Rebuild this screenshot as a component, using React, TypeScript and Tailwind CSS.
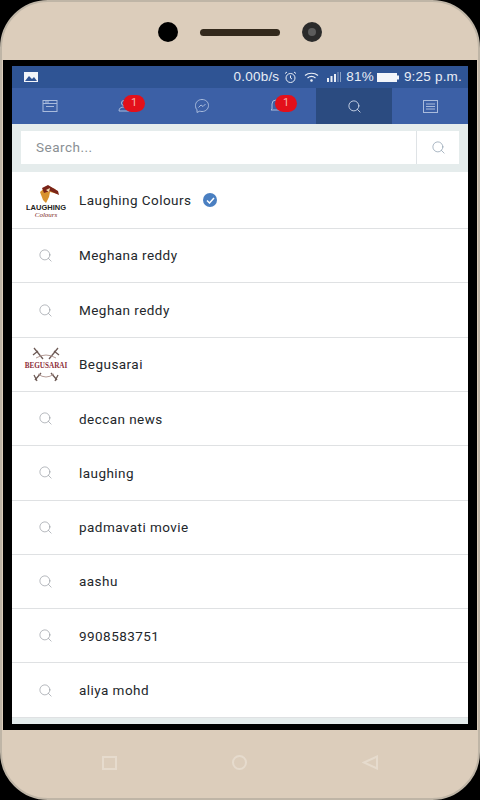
import { Search } from 'lucide-react';

const ROWS = [
  { label: 'Meghana reddy', h: 'h-[54px]' },
  { label: 'Meghan reddy', h: 'h-[55px]' },
];
const ROWS2 = ['deccan news', 'laughing', 'padmavati movie', 'aashu', '9908583751', 'aliya mohd'];

function LaughingLogo() {
  return (
    <svg width="42" height="36" viewBox="0 0 42 36" aria-hidden>
      <path d="M15 10 L22 4 L30 7 L33 12 L25 10 L24 15 L21 21 L18 18 Z" fill="#d8922f" />
      <path d="M17 6 L23 3 L33 9 L34 13 L25 9 L19 11 Z" fill="#7a2418" />
      <path d="M21 8 L25 6 L24 10 Z" fill="#f3e0b8" />
      <text x="21" y="28" textAnchor="middle" fontFamily="Liberation Sans, sans-serif" fontSize="7.5" fontWeight="700" fill="#222">LAUGHING</text>
      <text x="21" y="35" textAnchor="middle" fontFamily="Liberation Serif, serif" fontStyle="italic" fontSize="7" fill="#7a2418">Colours</text>
    </svg>
  );
}

function BegusaraiLogo() {
  return (
    <svg width="46" height="36" viewBox="0 0 46 36" aria-hidden>
      <g stroke="#6d5a55" strokeWidth="1.3" fill="none">
        <path d="M11 1 L20 12 M35 1 L26 12 M12 33 L18 26 M34 33 L28 26" />
        <path d="M10 8 L15 4 M36 8 L31 4 M14 34 L11 28 M32 34 L35 28" />
        <path d="M13 11 Q23 5 33 11 M15 27 Q23 33 31 27" stroke="#b49b96" strokeWidth="1" />
      </g>
      <text x="23" y="20.500" textAnchor="middle" fontFamily="Liberation Serif, serif" fontSize="7.200" fontWeight="700" fill="#8e2f3c">BEGUSARAI</text>
    </svg>
  );
}

function Badge() {
  return (
    <span className="absolute left-[5px] top-[-3px] flex h-[17px] w-[22px] items-center justify-center rounded-full bg-[#e3101a] text-[11px] text-[#f5b5a8]">
      1
    </span>
  );
}

function TabBar() {
  return (
    <div className="flex h-9 bg-[#3c60a6] text-[#a9bbdc]">
      <div className="flex w-[76px] items-center justify-center">
        <svg width="16" height="14" viewBox="0 0 16 14" fill="none" stroke="currentColor" strokeWidth="1">
          <rect x="1" y="1.500" width="14" height="11" />
          <path d="M1 4.500h14M3 3h4M4 7.500h8" />
        </svg>
      </div>
      <div className="flex w-[76px] items-center justify-center">
        <div className="relative h-4 w-4">
          <svg width="12" height="14" viewBox="0 0 12 14" fill="none" stroke="currentColor" strokeWidth="1">
            <circle cx="6" cy="5" r="2.500" />
            <path d="M1 13c0-3 2-4 5-4s5 1 5 4z" />
          </svg>
          <Badge />
        </div>
      </div>
      <div className="flex w-[76px] items-center justify-center">
        <svg width="16" height="16" viewBox="0 0 16 16" fill="none" stroke="currentColor" strokeWidth="1">
          <path d="M8 1.500c3.800 0 6.500 2.700 6.500 6s-2.700 6-6.500 6c-.8 0-1.500-.1-2.200-.4L3 14.500v-2.700C2 10.800 1.500 9.300 1.500 7.500c0-3.300 2.700-6 6.500-6z" />
          <path d="M4.500 9.500l2.500-2.500 2 1.500 2.500-2.500" />
        </svg>
      </div>
      <div className="flex w-[76px] items-center justify-center">
        <div className="relative h-4 w-4">
          <svg width="12" height="14" viewBox="0 0 12 14" fill="none" stroke="currentColor" strokeWidth="1">
            <path d="M2 11V6a4 4 0 0 1 8 0v5l1 1H1z" />
          </svg>
          <Badge />
        </div>
      </div>
      <div className="flex w-[76px] items-center justify-center bg-[#2b4b80] text-[#d5deee]">
        <Search size={15} strokeWidth={1.4} />
      </div>
      <div className="flex w-[76px] items-center justify-center">
        <svg width="15" height="13" viewBox="0 0 15 13" fill="none" stroke="currentColor" strokeWidth="1">
          <rect x="0.500" y="0.500" width="14" height="12" />
          <path d="M3 4h9M3 6.500h9M3 9h9" />
        </svg>
      </div>
    </div>
  );
}

function StatusBar() {
  return (
    <div className="flex h-[22px] items-center justify-between bg-[#2f5494] pl-3 pr-[6px] font-['Liberation_Sans',sans-serif] text-[13.500px] text-[#e8edf5]">
      <svg width="14" height="10" viewBox="0 0 14 10">
        <rect width="14" height="10" fill="#f2f5fa" />
        <path d="M1 9 L5 4 L8 7 L10 5 L13 9 Z" fill="#2f5494" />
      </svg>
      <div className="flex items-center tracking-[0.2px]">
        <span>0.00b/s</span>
        <svg className="ml-[5px]" width="13" height="13" viewBox="0 0 13 13" fill="none" stroke="currentColor" strokeWidth="1">
          <circle cx="6.500" cy="7" r="4.500" />
          <path d="M6.500 4.500V7l1.500 1M1 2.500 3 1M12 2.500 10 1" />
        </svg>
        <svg className="ml-[7px]" width="15" height="10" viewBox="0 0 15 10" fill="none" stroke="currentColor" strokeWidth="1.200">
          <path d="M1 3.500c3.500-3 9.500-3 13 0M3.500 6c2.300-1.800 5.700-1.800 8 0" />
          <circle cx="7.500" cy="8.500" r="0.700" fill="currentColor" />
        </svg>
        <svg className="ml-[8px]" width="15" height="10" viewBox="0 0 15 10" fill="currentColor">
          <rect x="0" y="6" width="2" height="4" />
          <rect x="3.500" y="4" width="2" height="6" />
          <rect x="7" y="2" width="2" height="8" />
          <rect x="10.500" y="0" width="1" height="10" opacity="0.500" />
          <rect x="13" y="0" width="1" height="10" opacity="0.500" />
        </svg>
        <span className="ml-[4px]">81%</span>
        <svg className="ml-[3px]" width="22" height="9" viewBox="0 0 22 9">
          <rect x="0" y="0" width="20" height="9" fill="#f2f5fa" />
          <rect x="20" y="2.500" width="2" height="4" fill="#f2f5fa" />
        </svg>
        <span className="ml-[5px]">9:25 p.m.</span>
      </div>
    </div>
  );
}

function SearchPanel() {
  return (
    <div className="flex h-12 items-center bg-[#e5ecec] px-[9px] pb-[1px]">
      <div className="flex h-[33px] flex-1 bg-white">
        <div className="flex flex-1 items-center pl-[15px] text-[13.500px] tracking-[0.5px] text-[#8a8f94]">Search...</div>
        <div className="flex w-[43px] items-center justify-center border-l border-[#dfe3e6] text-[#8fa0b0]">
          <Search size={15} strokeWidth={1.2} />
        </div>
      </div>
    </div>
  );
}

function Row({ label, icon, after, className }: { label: string; icon: React.ReactNode; after?: React.ReactNode; className: string }) {
  return (
    <div className={`flex items-center border-b border-[#dfe1e3] ${className}`}>
      <div className="flex w-[67px] shrink-0 items-center justify-center">{icon}</div>
      <span className="text-[13.500px] tracking-[0.45px] text-[#23272b]">{label}</span>
      {after}
    </div>
  );
}

const SearchIcon = <Search size={15} strokeWidth={1} className="text-[#8b9198]" />;

export default function App() {
  return (
    <div className="flex h-[800px] w-[480px] flex-col overflow-hidden bg-black font-['Roboto',sans-serif]">
      <div className="flex h-full flex-col overflow-hidden rounded-t-[48px] rounded-b-[48px] border-2 border-[#bfb5a6] bg-[#dccdbb]">
        <div className="flex h-[58px] shrink-0 items-center justify-center pt-[2px]">
          <div className="h-5 w-5 rounded-full bg-black" />
          <div className="mx-[22px] h-[7px] w-20 rounded-full bg-[#33291c]" />
          <div className="flex h-5 w-5 items-center justify-center rounded-full bg-[#2b2b2b]">
            <div className="h-2 w-2 rounded-full bg-[#5c5c5c]" />
          </div>
        </div>
        <div className="mx-[1px] flex h-[670px] shrink-0 flex-col bg-black px-[9px] pt-[6px] pb-[6px]">
          <div className="flex flex-1 flex-col bg-white">
            <StatusBar />
            <TabBar />
            <SearchPanel />
            <Row
              label="Laughing Colours"
              className="h-[57px]"
              icon={<LaughingLogo />}
              after={
                <span className="ml-[12px] flex h-[14px] w-[14px] items-center justify-center rounded-full bg-[#4a7fc1]">
                  <svg width="9" height="7" viewBox="0 0 9 7" fill="none" stroke="white" strokeWidth="1.500">
                    <path d="M1 3.500 3.500 6 8 1" />
                  </svg>
                </span>
              }
            />
            {ROWS.map((r) => (
              <Row key={r.label} label={r.label} className={r.h} icon={SearchIcon} />
            ))}
            <Row label="Begusarai" className="h-[54px]" icon={<BegusaraiLogo />} />
            {ROWS2.map((label) => (
              <Row key={label} label={label} className="h-[54.300px]" icon={SearchIcon} />
            ))}
            <div className="flex-1 bg-[#e5ecec]" />
          </div>
        </div>
        <div className="flex flex-1 items-center justify-center gap-[115px] pb-[3px] text-[#e6dbcd]">
          <div className="h-[14px] w-[15px] border-2 border-current" />
          <div className="h-[15px] w-[15px] rounded-full border-2 border-current" />
          <svg width="16" height="15" viewBox="0 0 16 15" fill="none" stroke="currentColor" strokeWidth="2">
            <path d="M15 1.500v12L2 7.500z" />
          </svg>
        </div>
      </div>
    </div>
  );
}
